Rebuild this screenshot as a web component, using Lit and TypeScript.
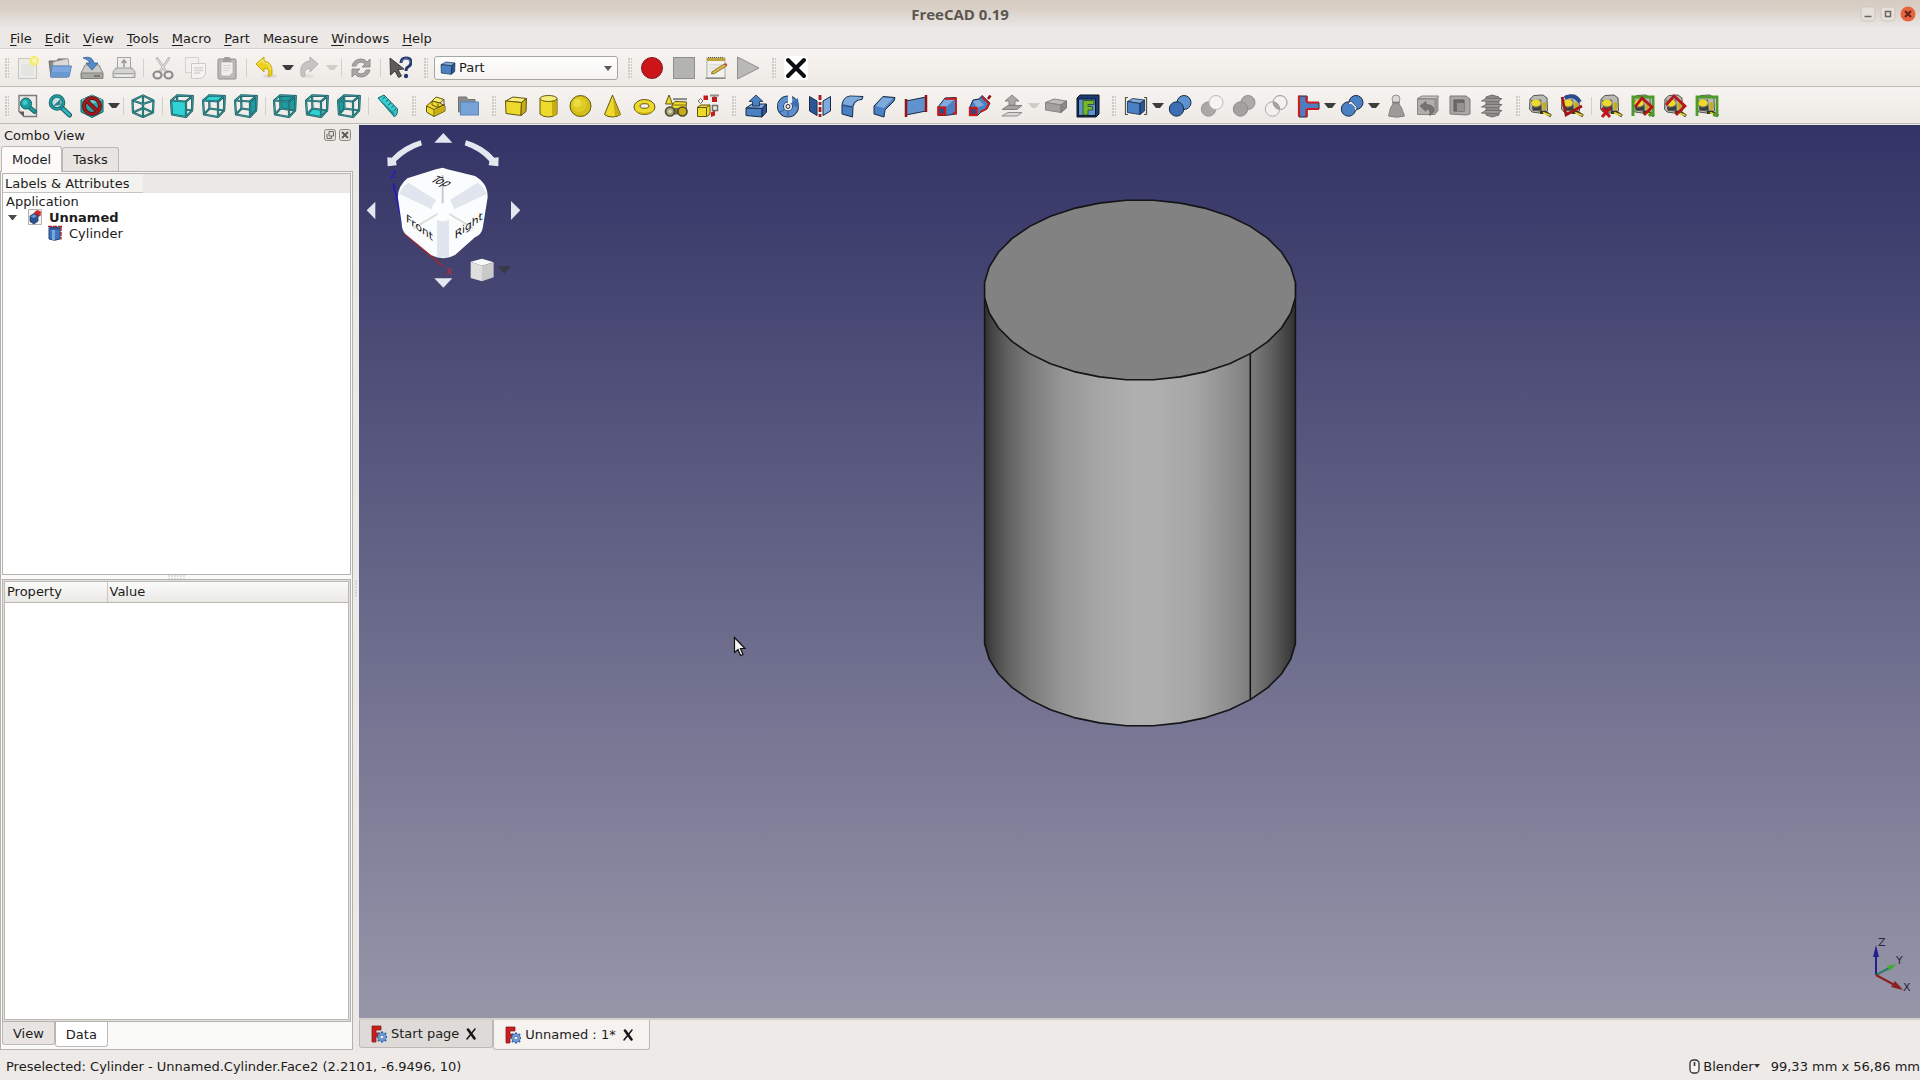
import { LitElement, html, css, svg, nothing, TemplateResult } from "lit";
import { customElement, state } from "lit/decorators.js";

type Art = TemplateResult;

/* ---- palette ---- */
const TEAL = "#2fd3d6";
const TEAL_MID = "#1a9ea1";
const TEAL_DARK = "#175f64";
const BLUE = "#4a80c4";
const BLUE_LIGHT = "#7fabdc";
const BLUE_DEEP = "#2a5596";
const INK = "#1b2a44";
const YEL = "#ecd92c";
const YEL_LIGHT = "#f7ee7a";
const YEL_DEEP = "#c7ad10";
const YEL_INK = "#625612";
const RED = "#c81a1a";

/* ---- shared drawing parts, all on a 24 x 24 grid ---- */
const FACES: Record<string, string> = {
  front: "M1 6.500 16 7.500 16 23 2 20.500Z",
  back: "M7 1.500 22.500 2 22 16.500 7.500 14.500Z",
  top: "M1 6.500 7 1.500 22.500 2 16 7.500Z",
  bottom: "M2 20.500 7.500 14.500 22 16.500 16 23Z",
  left: "M1 6.500 7 1.500 7.500 14.500 2 20.500Z",
  right: "M16 7.500 22.500 2 22 16.500 16 23Z",
};

const wire = (d: string): Art => svg`
  <path d=${d} fill="none" stroke=${TEAL_DARK} stroke-width="2.2" stroke-linejoin="round"></path>
  <path d=${d} fill="none" stroke="#59b9bb" stroke-width="0.6" stroke-linejoin="round"></path>`;

const viewCube = (face: string, tone: string, inFront: boolean): Art => svg`
  ${inFront ? nothing : svg`<path d=${FACES[face]} fill=${tone}></path>`}
  ${wire(FACES.back)}${wire("M2 20.500 7.500 14.500")}
  ${inFront ? svg`<path d=${FACES[face]} fill=${tone}></path>` : nothing}
  ${wire(FACES.top)}${wire(FACES.right)}${wire("M1 6.500 2 20.500 16 23")}`;

const block = (top: string, front: string, side: string, ink: string): Art => svg`
  <path d="M1.500 7 9 3 22.500 4.500 17.500 8.500Z" fill=${top} stroke=${ink} stroke-linejoin="round"></path>
  <path d="M1.500 7 17.500 8.500 17 21.500 2 19.500Z" fill=${front} stroke=${ink} stroke-linejoin="round"></path>
  <path d="M17.500 8.500 22.500 4.500 22 17.500 17 21.500Z" fill=${side} stroke=${ink} stroke-linejoin="round"></path>`;

const tape = (): Art => svg`
  <path d="M2 5 6 1.500 15 1 19 4 19.500 17 15 19.500 4 18 1.500 15Z" fill="#b9b9b5" stroke="#55554f"></path>
  <path d="M3 6 13 5.500 14.500 18 4.500 16.500Z" fill="#6a6a66"></path>
  <ellipse cx="8" cy="9" rx="4.800" ry="3.600" fill=${YEL}></ellipse>
  <path d="M4 13q4 2 9-1v4l-8 .5Z" fill="#3c3c3a"></path>
  <ellipse cx="16.500" cy="12" rx="1.800" ry="4" fill=${YEL_DEEP}></ellipse>
  <path d="M12 18.500 17 18 23 22" fill="none" stroke="#3a3614" stroke-width="3"></path>
  <path d="M15 18.500 22.500 21.500" fill="none" stroke=${YEL} stroke-width="1.600"></path>`;

const spheres = (a: string, b: string, ink: string): Art => svg`
  <circle cx="16" cy="8.500" r="7" fill=${b} stroke=${ink}></circle>
  <circle cx="8.500" cy="15" r="7.200" fill=${a} stroke=${ink}></circle>`;

const ICONS: Record<string, Art> = {
  new: svg`
    <rect x="2.500" y="2.500" width="18" height="20" fill="#ecece9" stroke="#c6c6c2"></rect>
    <rect x="5" y="8" width="13" height="12" fill="#dededb" opacity=".5"></rect>
    <circle cx="18" cy="5" r="5" fill="#f3ea77"></circle><circle cx="18.500" cy="4.500" r="2.600" fill="#f9f4a8"></circle>`,
  open: svg`
    <path d="M1 5h8l1-2h10v6l-1 12H3Z" fill="#8a8a87" stroke="#6d6d6a"></path>
    <path d="M5 6 20 2.500 21 10H5Z" fill="#d9d9d6" stroke="#9a9a97" stroke-width=".7"></path>
    <path d="M4 10h19.500L21 21H2.500Z" fill="#7ba7dc" stroke="#5a87c0"></path><path d="M3.500 16h18.500l-1 4.500H3Z" fill="#6a98d0"></path>`,
  save: svg`
    <path d="M5 9h14l4 8v5.500H1V17Z" fill="#c9c9c6" stroke="#8b8b88"></path>
    <path d="M1.500 17h21v5.500h-21Z" fill="#a9a9a6" stroke="#85857f"></path><path d="M14 20h6" stroke="#666" stroke-width="1.500"></path>
    <path d="M3 2q9-3 11 5h4l-6 7-6-7h4Q8 3 3 2Z" fill="#5689c9" stroke="#34609c" stroke-width=".8"></path>`,
  print: svg`
    <rect x="5.500" y="1.500" width="13" height="12" fill="#ededeb" stroke="#a5a5a2"></rect>
    <path d="M12 4v7M9.500 7 12 4l2.500 3" fill="none" stroke="#9b9b98" stroke-width="1.500"></path>
    <path d="M4 12h16l3 4v5.500H1V16Z" fill="#d4d4d1" stroke="#999996"></path><path d="M1.500 17.500h21" stroke="#a5a5a2"></path>
    <path d="M4 20h16" stroke="#f2f2f0" stroke-width="1.500"></path>`,
  cut: svg`
    <path d="M5.500 1.500 16 17M18.500 1.500 8 17" stroke="#b9b8b6" stroke-width="2.600" fill="none"></path>
    <path d="M6 2.500 15.500 16M18 2.500 8.500 16" stroke="#e6e5e3" stroke-width="1" fill="none"></path>
    <ellipse cx="6.500" cy="19" rx="4" ry="3.500" fill="none" stroke="#8b8b89" stroke-width="2.200"></ellipse>
    <ellipse cx="17.500" cy="19" rx="4" ry="3.500" fill="none" stroke="#8b8b89" stroke-width="2.200"></ellipse>`,
  copy: svg`
    <rect x="2.500" y="1.500" width="13" height="15" fill="#f1f0ee" stroke="#d3d2d0"></rect>
    <path d="M8.500 7.500h14v11l-4 4h-10Z" fill="#f4f3f1" stroke="#cbcac8"></path>
    <path d="M11 12h9M11 14.500h9M11 17h6" stroke="#d4d3d1" stroke-width="1.300"></path>`,
  paste: svg`
    <rect x="3" y="3" width="18" height="20" rx="1" fill="#bcbbb9" stroke="#8f8e8c"></rect>
    <path d="M6 6h12v10.500L14.500 20H6Z" fill="#f0efed" stroke="#aaa9a7" stroke-width=".7"></path>
    <path d="M8 3.500 9.500 1h5L16 3.500V6H8Z" fill="#a09f9d"></path><path d="M8 9.500h8M8 12h8M8 14.500h6" stroke="#d2d1cf"></path>`,
  undo: svg`
    <ellipse cx="16" cy="20" rx="7" ry="2" fill="#ddd8d2"></ellipse>
    <path d="M2 8 10 1v4q9 1 8 13-1 3-4 2 3-7-4-8v4Z" fill="#ecd21e" stroke="#c2a70d"></path>
    <path d="M4 8 9 3.500V6.500q7 0 8 7" fill="none" stroke="#f8ee8c"></path>`,
  redo: svg`
    <ellipse cx="9" cy="20" rx="7" ry="2" fill="#e2dfdb"></ellipse>
    <path d="M20 8 12 1v4Q1 6 3 19q1 3 4 1-2-7 5-8v4Z" fill="#c6c5c2" stroke="#b2b1ae"></path>`,
  refresh: svg`
    <path d="M3 10Q5 3 12 3q4 0 6 3l3-3v8h-8l3-3q-2-2-4-2-4 0-5 4Z" fill="#a8a7a5" stroke="#8f8e8c"></path>
    <path d="M21 14q-2 7-9 7-4 0-6-3l-3 3v-8h8l-3 3q2 2 4 2 4 0 5-4Z" fill="#a8a7a5" stroke="#8f8e8c"></path>`,
  whats: svg`
    <path d="M2 2 16 13l-6 .5L13.500 20l-3 1.500L7 15l-4.500 4Z" fill="#5c5c5a" stroke="#3a3a39"></path>
    <path d="M13 7q0-5 5-5t5 4.500q0 3-3 4.500-2 1-2 4" fill="none" stroke="#26386e" stroke-width="3"></path>
    <path d="M13.300 6.500q.5-4 4.700-4t4.500 4" fill="none" stroke="#5c75b4" stroke-width="1"></path><circle cx="18" cy="20" r="2.200" fill="#26386e"></circle>`,
  record: svg`<circle cx="12" cy="12" r="10.500" fill="#cb1518" stroke="#7d1a1b"></circle>`,
  stop: svg`<rect x="1.500" y="1.500" width="21" height="21" fill="#b3b3b1" stroke="#8f8f8c"></rect>`,
  notes: svg`
    <rect x="3" y="2" width="18" height="20" fill="#f1f1ee" stroke="#a9a9a6"></rect><path d="M1.500 21.500h20v1.500h-20Z" fill="#8d8d8a"></path>
    <path d="M3 2h18v3H3Z" fill="#bfa338"></path><path d="M4 1.500h16" stroke="#55534a" stroke-dasharray="1 1"></path>
    <path d="M5 9h13M5 12h12M5 15h9" stroke="#d1d1ce"></path>
    <path d="M8 16 20 8l2.500 2L10.500 17.500 7.500 18Z" fill="#e2b93c" stroke="#75602a" stroke-width=".8"></path><path d="M20 8 22 7l1.500 2-1.500 1Z" fill="#cc4544"></path>`,
  play: svg`<path d="M1.500 1 23 12 1.500 23Z" fill="#b9b9b7" stroke="#8f8f8c"></path>`,
  close: svg`<rect width="24" height="24" fill="#fff"></rect><path d="M4 4 20 20M20 4 4 20" stroke="#0e0e12" stroke-width="4" stroke-linecap="round"></path>`,

  fitAll: svg`
    <path d="M3 1.500h17.500v21H8l-5-5Z" fill="#ecebe9" stroke="#7c7b79" stroke-width="1.400"></path><path d="M3 17.500h5v5Z" fill="#5e5d5b"></path>
    <path d="M13 13 18.500 17.500" stroke=${TEAL_DARK} stroke-width="4.500" stroke-linecap="round"></path><path d="M13 13 18.500 17.500" stroke=${TEAL_MID} stroke-width="2.500" stroke-linecap="round"></path>
    <circle cx="10" cy="9.500" r="5.500" fill=${TEAL_MID} stroke=${TEAL_DARK}></circle><circle cx="9" cy="8.500" r="2.500" fill="#46c6c9"></circle>`,
  fitSel: svg`
    <path d="M13.500 13.500 21.500 21" stroke=${TEAL_DARK} stroke-width="5" stroke-linecap="round"></path><path d="M13.500 13.500 21.500 21" stroke="#2fb9bc" stroke-width="2.800" stroke-linecap="round"></path>
    <circle cx="9" cy="8.500" r="6.500" fill="#c6dfe0" stroke=${TEAL_DARK} stroke-width="3.600"></circle><circle cx="9" cy="8.500" r="6.500" fill="none" stroke=${TEAL_MID} stroke-width="2"></circle>
    <path d="M5 12 12.500 5v6Z" fill="#2b8488"></path>`,
  drawStyle: svg`
    <path d="M12 1 23 6v12l-11 5.500L1 18V6Z" fill="#29a5a8" stroke=${TEAL_DARK}></path><path d="M12 1 23 6l-11 4L1 6Z" fill="#63cfd1"></path>
    <circle cx="12" cy="12" r="8" fill="none" stroke="#641315" stroke-width="4"></circle><path d="M6.500 6.500 17.500 17.500" stroke="#641315" stroke-width="4"></path>
    <circle cx="12" cy="12" r="8" fill="none" stroke="#a61c1f" stroke-width="2.200"></circle><path d="M6.500 6.500 17.500 17.500" stroke="#a61c1f" stroke-width="2.200"></path>`,
  iso: svg`
    ${wire("M12 14V2M12 14 2 18.500M12 14 22 18.500")}
    ${wire("M12 1.500 22.500 6.500 22 18.500 12 23 2 18.500 1.500 6.500Z")}${wire("M1.500 6.500 12 10 22.500 6.500M12 10V23")}`,
  front: viewCube("front", TEAL, true),
  top: viewCube("top", TEAL, true),
  right: viewCube("right", TEAL_MID, true),
  rear: viewCube("back", TEAL_MID, false),
  bottom: viewCube("bottom", TEAL, false),
  left: viewCube("left", TEAL_MID, false),
  ruler: svg`
    <path d="M2 4 8 1 21.500 15 21 20 18.500 23Z" fill="#38cdd0" stroke=${TEAL_DARK}></path><path d="M2 4 18.500 19v4Z" fill="#1f9396"></path>
    <path d="M9 3 6.500 5M12 6l-2 1.500M15 9l-3 2M17.500 12l-2 1.500M20 15l-2.500 2" stroke=${TEAL_DARK}></path>`,

  part: svg`
    <path d="M8 7 12 3 20 5.500 16 9Z" fill=${YEL_LIGHT} stroke=${YEL_INK}></path><path d="M2.500 12 8 7 16 9 21 12v5L10 22.500 2.500 18Z" fill=${YEL} stroke=${YEL_INK}></path>
    <path d="M2.500 12 10 15.500 21 10.500M10 15.500V22.500M8 7v4l6 2.500 6-3V5.500M14 9.500v4" fill="none" stroke=${YEL_INK}></path>
    <path d="M10.500 16 20.500 12v4.500l-10 5Z" fill=${YEL_DEEP}></path>`,
  group: svg`
    <path d="M2.500 3h8l1 2.500H19V18H2.500Z" fill="#8b8b89" stroke="#71716e"></path><rect x="4.500" y="8" width="18" height="13" fill="#78a3d7" stroke="#5883bb"></rect>`,
  box: block(YEL_LIGHT, YEL, YEL_DEEP, YEL_INK),
  cylinder: svg`
    <path d="M4 4.500V20q3 3 8.500 3t8.500-3V4.500Z" fill=${YEL} stroke=${YEL_INK}></path><path d="M16 7v15.500q3-.5 4.500-2V5Z" fill=${YEL_DEEP}></path>
    <ellipse cx="12.500" cy="4.500" rx="8.500" ry="3" fill=${YEL_LIGHT} stroke=${YEL_INK}></ellipse>`,
  sphere: svg`
    <circle cx="12.500" cy="12" r="10.500" fill="#d3bd18" stroke=${YEL_INK}></circle><circle cx="11" cy="10.500" r="7.500" fill="#dfcb24"></circle><circle cx="9.500" cy="9" r="4" fill="#eadb3e"></circle>`,
  cone: svg`
    <path d="M12.500 1 4.500 20.500q3 2.500 8 2.500t8-2.500Z" fill=${YEL} stroke=${YEL_INK}></path><path d="M13 3 15 22.500q3-.3 5-2Z" fill=${YEL_DEEP}></path>`,
  torus: svg`
    <ellipse cx="12.500" cy="13" rx="10.500" ry="7.500" fill=${YEL} stroke=${YEL_INK}></ellipse><path d="M3 16q9 6 19 0-2 4-9.500 4T3 16Z" fill=${YEL_DEEP}></path>
    <ellipse cx="12.500" cy="12" rx="4.500" ry="2.300" fill="#f3efec" stroke=${YEL_INK}></ellipse>`,
  primitives: svg`
    <path d="M5 1 1.500 10h7Z" fill=${YEL} stroke=${YEL_INK}></path><rect x="9" y="4" width="14" height="2.200" fill="#8f8f8b"></rect>
    <path d="M8 11 11 7.500 22.500 8 22 15H8Z" fill=${YEL} stroke=${YEL_INK}></path><path d="M8 11h14" stroke=${YEL_INK} stroke-width=".8"></path>
    <rect x="8" y="14" width="8" height="6.500" fill="#6c694c"></rect><circle cx="6" cy="17.500" r="4.500" fill="#a9a477" stroke="#4b4933" stroke-width="1.600"></circle><circle cx="6" cy="17.500" r="1.800" fill="#d9d6bb"></circle>
    <circle cx="18.500" cy="17.500" r="4.500" fill=${YEL_DEEP} stroke="#4b4933" stroke-width="1.600"></circle>`,
  builder: svg`
    <path d="M1.500 13 5 11h9v9l-3 2.500H1.500Z" fill=${YEL} stroke=${YEL_INK}></path><path d="M1.500 13.500h9v9M10.500 13.500 14 11" fill="none" stroke=${YEL_INK}></path>
    <path d="M4.500 4.500 7 7 4.500 9.500 2 7Z" fill="#eee" stroke="#6e6e6a"></path><rect x="7.500" y="1.500" width="4.500" height="4.500" fill=${RED}></rect>
    <path d="M14 1.500h9M18.500 1.500v5" stroke="#8d8d89" stroke-width="2"></path><rect x="16" y="3" width="5" height="5" fill=${RED}></rect>
    <rect x="16.500" y="11.500" width="5" height="5" fill="#eee" stroke="#6e6e6a" stroke-width="1.500"></rect><path d="M15 18.500 19 16.500v5l-4 1.500Z" fill=${RED}></path>`,

  extrude: svg`
    <path d="M2 14 8 10h14.500L18 14.500Z" fill=${BLUE_LIGHT} stroke=${INK}></path><path d="M2 14 18 14.500V23L2 21.500Z" fill=${BLUE} stroke=${INK}></path><path d="M18 14.500 22.500 10v8L18 23Z" fill=${BLUE_DEEP} stroke=${INK}></path>
    <path d="M12 1 19 7.500h-3.500V12h-7V7.500H5Z" fill=${BLUE} stroke=${INK} stroke-width=".8"></path>`,
  revolve: svg`
    <circle cx="12" cy="12.500" r="7.500" fill="none" stroke=${INK} stroke-width="7"></circle><circle cx="12" cy="12.500" r="7.500" fill="none" stroke="#5b8fce" stroke-width="5.500"></circle>
    <path d="M12 0h4v12h-4Z" fill="#f3efec"></path><path d="M22 4 14 10l9 4Z" fill="#3c70b3"></path><circle cx="12" cy="12.500" r="2" fill="#f3efec" stroke=${INK}></circle><path d="M4 18 8 16M12 17v5" stroke="#2b5897"></path>`,
  mirror: svg`
    <path d="M1.500 2.500 9 7v14.500L1.500 17Z" fill=${BLUE_DEEP} stroke=${INK}></path><path d="M22.500 2.500 15 7v14.500L22.500 17Z" fill=${BLUE_LIGHT} stroke=${INK}></path>
    <path d="M12 1v5M12 8v3M12 13v5M12 20v3" stroke="#a71c1f" stroke-width="2.800"></path>`,
  fillet: svg`
    <path d="M2 20V11Q3 3 10 2l13 .5-1 3q-7 0-9 7L12.500 23Z" fill=${BLUE} stroke=${INK}></path><path d="M10 2.500 22 3l-1 2q-7 0-9 7L3 10q1-7 7-7.500Z" fill=${BLUE_LIGHT}></path><path d="M3 11.500 12 13" stroke=${INK} stroke-width=".7"></path>`,
  chamfer: svg`
    <path d="M2 20 2 12 11 2.500 23 3.500 22 7 13 16 12 23Z" fill=${BLUE} stroke=${INK}></path><path d="M11 3.500 21 4.500 12 14 3.500 12Z" fill=${BLUE_LIGHT}></path>`,
  ruled: svg`
    <path d="M2 7 22 3v14L2 21Z" fill="#5f92cf" stroke=${INK}></path><path d="M2 5v18M22 1v17" stroke="#921316" stroke-width="2.500"></path>`,
  loft: svg`
    <path d="M2 13 9 4 20 3.500V20L9 21.500H2Z" fill=${BLUE} stroke=${INK}></path><path d="M9 5h10l-9 8H3Z" fill=${BLUE_LIGHT}></path>
    <path d="M9 5 20 4.500v15l-3-1" fill="none" stroke=${RED} stroke-width="1.800"></path><rect x="2.500" y="13.500" width="6.500" height="7" fill="#2a4c88" stroke=${RED} stroke-width="2.300"></rect>`,
  sweep: svg`
    <path d="M2 13 5 6 11 5 14 1.500 22 9 19 15 13 18 9 22Z" fill=${BLUE} stroke=${INK}></path><path d="M5 7 11 6 16 11 9 14Z" fill=${BLUE_LIGHT}></path>
    <path d="M14 3 21 9.500 18 15 12 18" fill="none" stroke=${RED} stroke-width="1.800"></path><rect x="2" y="14" width="6.500" height="7" fill="#2a4c88" stroke=${RED} stroke-width="2.300"></rect><path d="M20 5 22.500 1.500" stroke="#8b1316" stroke-width="2.600"></path>`,
  offset: svg`
    <path d="M12 1 19 7h-4v4H9V7H5Z" fill="#a9a8a6" stroke="#878684"></path><path d="M2 15.500 8 11.500h14L17 15.500Z" fill="#a3a2a0" stroke="#82817f"></path><path d="M2 22 8 18.500h14L17 22Z" fill="#dad9d7" stroke="#8f8e8c"></path>`,
  thickness: svg`
    <path d="M1.500 8.500 10 5l12.500 2L17 11Z" fill="#bdbcba" stroke="#868583"></path><path d="M1.500 8.500 17 11v7.500L1.500 16Z" fill="#a2a19f" stroke="#868583"></path><path d="M17 11 22.500 7v7L17 18.500Z" fill="#8a8987" stroke="#777674"></path>`,
  faces: svg`
    <path d="M1 4 4 1h19v19l-3 3H1Z" fill="#1c3b70" stroke="#0c1425"></path><rect x="2.500" y="5" width="17" height="16.500" fill="#5b93d4" stroke="#0c1425"></rect>
    <path d="M7 6.500h11v4h-6v2h4.500V16H12v5H7Z" fill="#74b62c" stroke="#2e4d12" stroke-width=".8"></path>`,

  compound: svg`
    <path d="M3.500 7.500 8.500 4.500 20.500 6 16 9.500Z" fill=${BLUE_LIGHT} stroke=${INK} stroke-width=".8"></path><path d="M3.500 7.500 16 9.500V20.500L3.500 18.500Z" fill=${BLUE} stroke=${INK} stroke-width=".8"></path><path d="M16 9.500 20.500 6v11L16 20.500Z" fill=${BLUE_DEEP} stroke=${INK} stroke-width=".8"></path>
    <path d="M4 3.500H1.500v17H4M20 3.500h2.500v17H20" fill="none" stroke="#55544f" stroke-width="1.200"></path>`,
  boolean: spheres("#3a6fb4", "#5f92d0", INK),
  cutB: svg`<circle cx="8.500" cy="15" r="7.200" fill="#a9a8a6" stroke="#969593"></circle><circle cx="16" cy="8.500" r="7" fill="#f5f4f2" stroke="#bbbab8"></circle>`,
  fuse: spheres("#a3a2a0", "#acabaa", "#8f8e8c"),
  common: svg`
    <circle cx="16" cy="8.500" r="7" fill="#f2f1ef" stroke="#adacaa"></circle><circle cx="8.500" cy="15" r="7.200" fill="#f2f1ef" stroke="#adacaa"></circle>
    <path d="M9.300 8Q14.500 8.500 15.500 15.400 10 14.500 9.300 8Z" fill="#a5a4a2" stroke="#949391"></path><circle cx="16" cy="8.500" r="7" fill="none" stroke="#adacaa"></circle>`,
  join: svg`
    <path d="M3 2h8v6.500h12v6.500H11v8H3Z" fill="#4c7fbf" stroke=${INK}></path><path d="M3 1.500V22.500M10.500 2v6M11 8.500h12M11 15h12M10.500 15v8" stroke="#cf1b1e" stroke-width="2.200" fill="none"></path>`,
  split: svg`
    ${spheres("#4a80c4", "#4a80c4", INK)}<path d="M8 9 11 7l6 6-1 4Z" fill="#f0edea" stroke=${INK} stroke-width=".6"></path><path d="M10 10.500 14.500 14.500" stroke="#4a80c4" stroke-width="3"></path>`,
  check: svg`
    <circle cx="12" cy="5" r="4" fill="#d9d8d6" stroke="#969593"></circle><path d="M9.500 9h5l3 5 3 8q-8 2.500-16 0l2-8Z" fill="#9c9b99" stroke="#82817f"></path><path d="M8 8.500h8" stroke="#82817f" stroke-width="1.600"></path>`,
  defeature: svg`
    <path d="M1.500 4.500 6 2h16.500L21 5Z" fill="#c5c4c2" stroke="#868583"></path><path d="M1.500 5H19v15.500H1.500Z" fill="#b0afad" stroke="#868583"></path><path d="M19 5 22.500 2v15L19 20.500Z" fill="#969593"></path>
    <path d="M4 12 10 7.500V10.500q8 0 8 6-1 4-4.500 5 2-6-3.500-6.500v2.500Z" fill="#757472" stroke="#62615f" stroke-width=".7"></path>`,
  section: svg`
    <path d="M2 2h16l4 3v15l-4 1L2 20Z" fill="#a8a7a5" stroke="#7c7b79"></path><rect x="6" y="6" width="10" height="11" fill="#6c6b69" stroke="#5a5957"></rect><rect x="9" y="9" width="7" height="8" fill="#93928f"></rect>`,
  cross: svg`
    <path d="M6 3 12 1l7 2v18l-7 2-6-2Z" fill="#8c8b89" stroke="#71706e"></path>
    <path d="M1.500 7 6 4.500h16L18 7.500ZM1.500 13 6 10.500h16L18 13.500ZM1.500 19 6 16.500h16L18 19.500Z" fill="#9d9c9a" stroke="#71706e"></path>`,

  mLinear: tape(),
  mAngular: svg`${tape()}<path d="M5 4Q14-1 20 8" fill="none" stroke="#2a4c8f" stroke-width="4"></path><path d="M2 3 6 21 22 12" fill="none" stroke="#a31418" stroke-width="2.600"></path>`,
  mClear: svg`${tape()}<path d="M3 14 11 23M11 14 3 23" stroke="#c0151a" stroke-width="3"></path>`,
  mToggleAll: svg`${tape()}<path d="M2 22V3H22V22M22 18 18 22" fill="none" stroke="#4f9a2a" stroke-width="3"></path><path d="M4 13 11 4 21 13 13 21" fill="none" stroke="#b5161b" stroke-width="2.800"></path>`,
  mToggle3d: svg`${tape()}<path d="M3 11 11 2 22 12 13 21" fill="none" stroke="#b5161b" stroke-width="2.800"></path>`,
  mToggleDelta: svg`${tape()}<path d="M2 22V3H22V21H18" fill="none" stroke="#4f9a2a" stroke-width="2.800"></path>`,

  cubeSmall: block(BLUE_LIGHT, BLUE, BLUE_DEEP, INK),
};

const icon = (name: string, cls = "ico"): TemplateResult =>
  html`<svg class=${cls} viewBox="0 0 24 24" aria-hidden="true">${ICONS[name]}</svg>`;

/* ---- tessellated cylinder: two 36-sided rings joined by straight sides ---- */
const RING = { cx: 180, cy: 110, rx: 156, ry: 90, depth: 346, sides: 36 };
const ringPoint = (step: number, dy: number): string => {
  const a = ((step * 360) / RING.sides - 5) * (Math.PI / 180);
  return `${(RING.cx + RING.rx * Math.cos(a)).toFixed(1)} ${(RING.cy + dy + RING.ry * Math.sin(a)).toFixed(1)}`;
};
const ring = (from: number, to: number, dy: number): string =>
  Array.from({ length: to - from + 1 }, (_, i) => ringPoint(from + i, dy)).join(" ");
const CAP_PATH = `M${ring(0, RING.sides - 1, 0)}Z`;
const BODY_PATH = `M${ringPoint(0, 0)} ${ring(0, 18, RING.depth)} ${ringPoint(18, 0)}Z`;
const SEAM_PATH = `M${ringPoint(5, 0)} ${ringPoint(5, RING.depth)}`;

/* Toolbar rows: [icon, label, has menu, disabled] or a divider token. */
type Tool = [string, string, boolean?, boolean?] | "sep" | "grip";

const FILE_BAR: Tool[] = [
  ["new", "New"], ["open", "Open"], ["save", "Save"], ["print", "Print"], "sep",
  ["cut", "Cut", false, true], ["copy", "Copy", false, true], ["paste", "Paste", false, true], "sep",
  ["undo", "Undo", true], ["redo", "Redo", true, true], "sep",
  ["refresh", "Refresh", false, true], "sep", ["whats", "What's this?"], "grip",
];
const MACRO_BAR: Tool[] = [
  "grip", ["record", "Record macro"], ["stop", "Stop recording", false, true], ["notes", "Macros"], ["play", "Run macro", false, true],
  "grip", ["close", "Close"],
];
const PART_BAR: Tool[] = [
  ["fitAll", "Fit all"], ["fitSel", "Fit selection"], ["drawStyle", "Draw style", true], "sep",
  ["iso", "Isometric"], "sep", ["front", "Front"], ["top", "Top"], ["right", "Right"], "sep",
  ["rear", "Rear"], ["bottom", "Bottom"], ["left", "Left"], "sep", ["ruler", "Measure distance"], "grip",
  ["part", "Create part"], ["group", "Create group"], "grip",
  ["box", "Cube"], ["cylinder", "Cylinder"], ["sphere", "Sphere"], ["cone", "Cone"], ["torus", "Torus"],
  ["primitives", "Create primitives"], ["builder", "Shape builder"], "grip",
  ["extrude", "Extrude"], ["revolve", "Revolve"], ["mirror", "Mirror"], ["fillet", "Fillet"], ["chamfer", "Chamfer"],
  ["ruled", "Ruled surface"], ["loft", "Loft"], ["sweep", "Sweep"], ["offset", "Offset", true, true],
  ["thickness", "Thickness", false, true], ["faces", "Color per face"], "grip",
  ["compound", "Compound", true], ["boolean", "Boolean"], ["cutB", "Cut", false, true], ["fuse", "Union", false, true],
  ["common", "Intersection", false, true], ["join", "Join", true], ["split", "Split", true],
  ["check", "Check geometry", false, true], ["defeature", "Defeaturing", false, true],
  ["section", "Section", false, true], ["cross", "Cross-sections", false, true], "grip",
  ["mLinear", "Measure linear"], ["mAngular", "Measure angular"], "sep", ["mClear", "Clear measurement"],
  ["mToggleAll", "Toggle all"], ["mToggle3d", "Toggle 3D"], ["mToggleDelta", "Toggle delta"],
];
const MENUS: [string, boolean][] = [
  ["File", true], ["Edit", true], ["View", true], ["Tools", true], ["Macro", true],
  ["Part", true], ["Measure", false], ["Windows", true], ["Help", true],
];

@customElement("app-root")
export class AppRoot extends LitElement {
  @state() private panel = "Model";
  @state() private propTab = "Data";
  @state() private page = "Unnamed : 1*";

  static styles = css`
    :host {
      display: flex;
      flex-direction: column;
      min-height: 100vh;
      background: #eeeae7;
      color: #1c1c1c;
      font: 13px/17px "DejaVu Sans", sans-serif;
      --dots: radial-gradient(circle at 1px 1px, #cbc8c5 1px, transparent 1px) 0 0 / 3px 3px;
    }
    * { box-sizing: border-box; }
    button, select { font: inherit; color: inherit; margin: 0; border: 0; padding: 0; background: none; }
    svg { display: block; }
    ul { list-style: none; margin: 0; padding: 0; }

    .titlebar {
      display: grid;
      grid-template-columns: 1fr auto 1fr;
      align-items: center;
      height: 27px;
      padding: 0 4px;
      background: linear-gradient(#d6cbc1, #d8cfc6 30%, #eae6e3);
    }
    .title { grid-column: 2; margin: 0; font: 700 15px/20px "Open Sans", sans-serif; color: #5c5650; }
    .winbtns { display: flex; justify-content: flex-end; gap: 4px; }
    .win { width: 16px; height: 16px; }
    .win svg { width: 16px; height: 16px; }

    .menubar { display: flex; height: 22px; padding: 2px 4px 0; background: #ece8e5; border-bottom: 1px solid #d5d1ce; }
    .menu { padding: 0 7px 0 6px; line-height: 18px; }
    .menu u { text-underline-offset: 2px; }

    .bar {
      display: flex;
      align-items: center;
      height: 38px;
      background: linear-gradient(#f6f3f0, #edeae6);
      border-bottom: 1px solid #bfbbb7;
    }
    .bar.second { height: 37px; padding-top: 1px; }
    .tool { display: flex; flex: none; align-items: center; height: 32px; padding: 0 4px; }
    .tool.has-menu::after {
      content: "";
      width: 8px;
      border: 4px solid transparent;
      border-top: 5px solid #3d3d3d;
      border-bottom: 0;
      margin: 0 0 0 4px;
    }
    .tool.has-menu { width: 44px; padding-right: 0; }
    .tool.has-menu:disabled::after { border-top-color: #cfccc9; }
    .ico { width: 24px; height: 24px; flex: none; }
    .sep { flex: none; width: 1px; height: 18px; margin: 0 3px; background: #d2cfcc; }
    .grip { flex: none; width: 4px; height: 20px; margin: 0 4px 0 8px; background: var(--dots); }
    .grip.first { margin: 0 3px 0 5px; }

    .workbench { position: relative; width: 184px; height: 24px; margin: 0 2px; flex: none; }
    .workbench select {
      appearance: none;
      width: 100%;
      height: 100%;
      padding: 0 24px 0 24px;
      border: 1px solid #a8a5a1;
      border-radius: 3px;
      background: linear-gradient(#fff, #f4f3f1);
    }
    .workbench .wb-icon { position: absolute; left: 6px; top: 4px; width: 16px; height: 16px; pointer-events: none; }
    .workbench .wb-arrow {
      position: absolute; right: 6px; top: 10px; border: 4px solid transparent; border-top: 5px solid #595959; border-bottom: 0; pointer-events: none;
    }

    .main { flex: 1; display: grid; grid-template-columns: 353px 6px 1fr; padding-top: 1px; }
    .dock { display: flex; flex-direction: column; min-height: 0; padding-bottom: 2px; }
    .dock-title { display: flex; align-items: center; gap: 3px; height: 20px; padding: 0 2px 0 4px; }
    .dock-title h2 { margin: 0 auto 0 0; font: inherit; }
    .mini { width: 12px; height: 12px; }
    .mini svg { width: 12px; height: 12px; }

    .tabs { display: flex; align-items: flex-end; height: 26px; padding-left: 1px; }
    .tab {
      height: 24px;
      padding: 0 10px;
      border: 1px solid #bcb8b4;
      border-bottom: 0;
      border-radius: 3px 3px 0 0;
      background: #e7e4e1;
    }
    .tab.on { position: relative; z-index: 1; height: 26px; background: #fcfbfa; margin-bottom: -1px; }

    .pane {
      flex: 1;
      display: flex;
      flex-direction: column;
      border: 1px solid #b5b1ad;
      background: #fafaf8;
      padding: 1px 1px 2px 1px;
    }
    .tree { flex: 405 1 0; border: 1px solid #b5b3ae; background: #fff; }
    .tree-head { display: flex; background: #ece8e5; height: 19px; line-height: 19px; }
    .tree-head span {
      width: 140px;
      padding-left: 2px;
      background: linear-gradient(90deg, #fafaf8, #f2f1ee);
      border-bottom: 1px solid #c6c3c0;
      white-space: nowrap;
    }
    .row { display: flex; align-items: center; height: 16px; padding-left: 3px; white-space: nowrap; }
    .row.doc { padding-left: 5px; font-weight: 700; }
    .row.item { padding-left: 44px; }
    .row svg { width: 16px; height: 16px; margin-right: 6px; }
    .twist { width: 9px; margin-right: 10px; border: 4px solid transparent; border-top: 5px solid #4a4a4a; border-bottom: 0; }
    .hgrip { width: 18px; height: 4px; margin: 0 auto; background: var(--dots); opacity: .6; }
    .props { flex: 444 1 0; border: 1px solid #b5b3ae; padding: 1px; background: #e2dfda; }
    .props-in { height: 100%; background: #fff; border: 1px solid #bdbab5; }
    table { width: 100%; border-collapse: collapse; }
    th {
      height: 20px; padding: 0 2px; text-align: left; font-weight: 400; background: linear-gradient(#fbfbf9, #e9e8e5); border-bottom: 1px solid #b9b6b2;
    }
    th.key { width: 102px; border-right: 1px solid #c9c6c2; }
    .btabs { display: flex; align-items: flex-start; height: 25px; }
    .btab { height: 23px; padding: 0 10px; border: 1px solid #bcb8b4; border-top: 0; border-radius: 0 0 3px 3px; background: #e7e4e1; }
    .btab.on { height: 25px; background: #fff; }

    .splitter { display: flex; align-items: center; justify-content: center; background: #eceae7; }
    .vgrip { width: 3px; height: 18px; background: var(--dots); opacity: .6; }

    .stage { display: flex; flex-direction: column; min-width: 0; }
    .view { position: relative; flex: 1; overflow: hidden; background: linear-gradient(#333366, #9796a9); }
    .solid { position: absolute; left: calc(50% - 180px); top: 55px; width: 360px; height: 560px; }
    .navicube { position: absolute; left: 1px; top: 0; width: 180px; height: 175px; }
    .axes { position: absolute; right: 0; bottom: 18px; width: 60px; height: 70px; }
    .pointer { position: absolute; left: 374px; top: 511px; width: 14px; height: 22px; }
    .lbl { font: 11px "DejaVu Sans", sans-serif; }
    .axis-lbl { font: 27px "DejaVu Sans", sans-serif; }
    .face-lbl { font: 32px "DejaVu Sans", sans-serif; }

    .pages { display: flex; align-items: flex-start; height: 34px; border-top: 2px solid #d3d0cc; }
    .page {
      display: flex;
      align-items: center;
      gap: 4px;
      height: 28px;
      padding: 0 15px 0 11px;
      border: 1px solid #bcb8b4;
      border-top: 0;
      border-radius: 0 0 3px 3px;
      background: #dedad7;
    }
    .page.on { height: 30px; background: #f5f2ef; }
    .page svg { width: 16px; height: 18px; flex: none; }
    .page .x { width: 12px; height: 12px; margin-left: 2px; }

    .status { display: flex; align-items: center; height: 28px; padding: 0 0 0 6px; }
    .status output { flex: 1; }
    .nav { display: flex; align-items: center; margin-right: 11px; }
    .nav svg { width: 11px; height: 15px; margin-right: 3px; }
    .nav::after { content: ""; border: 3px solid transparent; border-top: 4px solid #333; border-bottom: 0; }
    .dims { white-space: nowrap; }
  `;

  private tool(t: Tool): TemplateResult {
    if (t === "sep") return html`<span class="sep"></span>`;
    if (t === "grip") return html`<span class="grip"></span>`;
    const [name, label, menu, off] = t;
    return html`<button class="tool ${menu ? "has-menu" : ""}" aria-label=${label} ?disabled=${!!off}>${icon(name)}</button>`;
  }

  private navicube() {
    return html`<svg class="navicube" viewBox="0 15 540 525" role="img" aria-label="Navigation cube">
      <g fill="#e2e7f0">
        <path d="M250 39 277 68H223Z"></path><path d="M250 503 277 475H223Z"></path>
        <path d="M20 271 46 245V298Z"></path><path d="M481 271 453 243V300Z"></path>
        <path d="M182 61 186 76Q140 92 108 124L110 136 83 139 82 112 95 113Q130 76 182 61Z"></path>
        <path d="M318 61 314 76Q360 92 388 124L386 136 415 139 416 112 403 113Q370 76 318 61Z"></path>
      </g>
      <path d="M100 190 133 335" stroke="#1c1cc0" stroke-width="5"></path>
      <path d="M133 340 248 438" stroke="#b32222" stroke-width="4"></path>
      <text class="axis-lbl" x="90" y="173" fill="#1c1cd0">Z</text>
      <text class="axis-lbl" x="257" y="465" fill="#d02222">X</text>
      <path d="M248 143 262 148 345 168Q384 190 383 232L368 325Q364 345 345 352L285 405Q250 425 213 405L140 345Q125 335 125 310L114 235Q112 200 142 175L228 148Z" fill="#fbfcfe"></path>
      <path d="M146 188 228 240 216 268 118 222Q125 200 146 188Z" fill="#e1e6ee"></path>
      <path d="M352 188 270 240 282 268 380 222Q372 200 352 188Z" fill="#e1e6ee"></path>
      <path d="M231 298H267V412H231Z" fill="#e1e6ee"></path>
      <circle cx="248" cy="271" r="33" fill="#fcfdff"></circle>
      <path d="M248 165V250" stroke="#c6cbd3" stroke-width="6"></path>
      <path d="M232 282 160 325M268 282 340 325" stroke="#dcdcd8" stroke-width="6"></path>
      <text class="face-lbl" transform="translate(138 304) skewY(36)" fill="#111">Front</text>
      <text class="face-lbl" transform="translate(284 358) skewY(-36)" fill="#111">Right</text>
      <text class="face-lbl" transform="translate(208 184) rotate(18) skewX(-38)" fill="#111">Top</text>
      <path d="M332 425 366 416 401 427 366 437Z" fill="#f7f7f7"></path><path d="M332 425 366 437V484L332 474Z" fill="#dededf"></path><path d="M401 427 366 437V484L401 472Z" fill="#c9c9ca"></path>
      <path d="M413 439H453L433 461Z" fill="#393942"></path>
    </svg>`;
  }

  private solid() {
    return html`<svg class="solid" viewBox="0 0 360 560" role="img" aria-label="Cylinder">
      <defs>
        <linearGradient id="side" gradientUnits="userSpaceOnUse" x1="24" x2="336" y1="0" y2="0">
          <stop offset="0" stop-color="#303030"></stop><stop offset=".03" stop-color="#474747"></stop>
          <stop offset=".08" stop-color="#636363"></stop><stop offset=".15" stop-color="#7c7c7c"></stop>
          <stop offset=".25" stop-color="#969696"></stop><stop offset=".36" stop-color="#a5a5a5"></stop>
          <stop offset=".48" stop-color="#afafaf"></stop><stop offset=".57" stop-color="#aeaeae"></stop>
          <stop offset=".68" stop-color="#a5a5a5"></stop><stop offset=".79" stop-color="#8e8e8e"></stop>
          <stop offset=".86" stop-color="#7b7b7b"></stop><stop offset=".93" stop-color="#5b5b5b"></stop>
          <stop offset=".98" stop-color="#3d3d3d"></stop><stop offset="1" stop-color="#2e2e2e"></stop>
        </linearGradient>
      </defs>
      <g stroke="#141416" stroke-width="1.600" stroke-linejoin="round">
        <path d=${BODY_PATH} fill="url(#side)"></path>
        <path d=${CAP_PATH} fill="#828282"></path>
        <path d=${SEAM_PATH}></path>
      </g>
    </svg>`;
  }

  private logo() {
    return html`<svg viewBox="0 0 16 18" aria-hidden="true">
      <path d="M1 1h9v4H5v3h4v3H5v6H1Z" fill="#c91f1f" stroke="#7d1313" stroke-width=".7"></path>
      <path d="M11 6.500v11M5.500 12h11M7 8l8 8M15 8l-8 8" stroke="#33609f" stroke-width="2"></path>
      <circle cx="11" cy="12" r="3" fill="none" stroke="#33609f" stroke-width="3"></circle>
      <circle cx="11" cy="12" r="3" fill="none" stroke="#6c9bd6" stroke-width="2"></circle><circle cx="11" cy="12" r="1.600" fill="#f2efec"></circle>
    </svg>`;
  }

  render() {
    const page = (name: string) => html`
      <button class="page ${this.page === name ? "on" : ""}" role="tab" aria-selected=${this.page === name} @click=${() => (this.page = name)}>
        ${this.logo()}<span>${name}</span>
        <svg class="x" viewBox="0 0 12 12" aria-hidden="true"><path d="M3 1.500 9.500 10.500" stroke="#15151a" stroke-width="2.600" stroke-linecap="round"></path><path d="M10 1 2 11" stroke="#15151a" stroke-width="1.500" stroke-linecap="round"></path></svg>
      </button>`;
    return html`
      <header class="titlebar">
        <h1 class="title">FreeCAD 0.19</h1>
        <div class="winbtns">
          <button class="win" aria-label="Minimize"><svg viewBox="0 0 16 16"><rect x="1" y="1" width="14" height="14" rx="3" fill="#e6e0da" stroke="#cfc7bf"></rect><path d="M4.500 10.500h7" stroke="#6b655f" stroke-width="1.500"></path></svg></button>
          <button class="win" aria-label="Maximize"><svg viewBox="0 0 16 16"><rect x="1" y="1" width="14" height="14" rx="3" fill="#e6e0da" stroke="#cfc7bf"></rect><rect x="5.500" y="5.500" width="5" height="5" fill="none" stroke="#6b655f" stroke-width="1.500"></rect></svg></button>
          <button class="win" aria-label="Close window"><svg viewBox="0 0 16 16"><circle cx="8" cy="8" r="7.500" fill="#e8633f"></circle><path d="M5 5 11 11M11 5 5 11" stroke="#5a2416" stroke-width="1.800"></path></svg></button>
        </div>
      </header>

      <nav class="menubar">
        ${MENUS.map(([m, key]) => html`<button class="menu">${key ? html`<u>${m[0]}</u>${m.slice(1)}` : m}</button>`)}
      </nav>

      <div class="bar" role="toolbar" aria-label="File and macro">
        <span class="grip first"></span>
        ${FILE_BAR.map((t) => this.tool(t))}
        <div class="workbench">
          <select aria-label="Workbench"><option>Part</option></select>
          ${icon("cubeSmall", "wb-icon")}<span class="wb-arrow"></span>
        </div>
        ${MACRO_BAR.map((t) => this.tool(t))}
      </div>
      <div class="bar second" role="toolbar" aria-label="View and part">
        <span class="grip first"></span>
        ${PART_BAR.map((t) => this.tool(t))}
      </div>

      <main class="main">
        <aside class="dock">
          <div class="dock-title">
            <h2>Combo View</h2>
            <button class="mini" aria-label="Float panel"><svg viewBox="0 0 12 12"><rect x=".5" y=".5" width="11" height="11" rx="2" fill="#e4e1dd" stroke="#8b8783"></rect><path d="M5 2.500h4.500V7H5ZM3 5v4.500h4.500V7" fill="none" stroke="#6b6865"></path></svg></button>
            <button class="mini" aria-label="Close panel"><svg viewBox="0 0 12 12"><rect x=".5" y=".5" width="11" height="11" rx="2" fill="#e4e1dd" stroke="#8b8783"></rect><path d="M3 3 9 9M9 3 3 9" stroke="#5b5855" stroke-width="1.800"></path></svg></button>
          </div>
          <div class="tabs" role="tablist">
            ${["Model", "Tasks"].map((n) => html`<button class="tab ${this.panel === n ? "on" : ""}" role="tab" aria-selected=${this.panel === n} @click=${() => (this.panel = n)}>${n}</button>`)}
          </div>
          <div class="pane">
            <section class="tree">
              <div class="tree-head"><span>Labels &amp; Attributes</span></div>
              <ul>
                <li class="row">Application</li>
                <li class="row doc"><span class="twist"></span>
                  <svg viewBox="0 0 16 16" aria-hidden="true"><path d="M1.500.5h13v15h-13Z" fill="#f4f4f2" stroke="#b4b4b0"></path><path d="M7 3.500 10 1l4 1.500-.5 4.500L10 8Z" fill="#d02a2a"></path><path d="M3 7 7 4.500l4 2V12l-4 3-4-2.500Z" fill="#2c5596" stroke="#14284c" stroke-width=".7"></path><path d="M3.500 7.500 7 5.500l3 1.500-3 2Z" fill="#6b98d3"></path></svg>
                  Unnamed</li>
                <li class="row item">
                  <svg viewBox="0 0 16 16" aria-hidden="true"><path d="M2 3v11q5.500 2.500 11 0V3Z" fill="#3e75bb" stroke="#20437c"></path><path d="M5 4v11h3V4Z" fill="#78a7de"></path><ellipse cx="7.500" cy="3" rx="5.500" ry="1.800" fill="#2a5090"></ellipse><path d="M1 1.500h14M14 2v12.500" stroke="#a81f24" stroke-width="1.400" stroke-dasharray="4 1"></path></svg>
                  Cylinder</li>
              </ul>
            </section>
            <span class="hgrip"></span>
            <section class="props"><div class="props-in">
              <table><thead><tr><th class="key" scope="col">Property</th><th scope="col">Value</th></tr></thead><tbody></tbody></table>
            </div></section>
            <div class="btabs" role="tablist">
              ${["View", "Data"].map((n) => html`<button class="btab ${this.propTab === n ? "on" : ""}" role="tab" aria-selected=${this.propTab === n} @click=${() => (this.propTab = n)}>${n}</button>`)}
            </div>
          </div>
        </aside>
        <div class="splitter"><span class="vgrip"></span></div>
        <section class="stage">
          <div class="view">
            ${this.solid()} ${this.navicube()}
            <svg class="axes" viewBox="0 0 60 70" role="img" aria-label="Axis cross">
              <path d="M16 45V20" stroke="#22228c" stroke-width="2"></path><path d="M16 15 19 27H13Z" fill="#22228c"></path>
              <path d="M16 45 33 36" stroke="#2b7d6a" stroke-width="2"></path><path d="M36 34 30 41 27 36Z" fill="#3fae2f"></path>
              <path d="M16 45 40 58" stroke="#8c2020" stroke-width="2"></path><path d="M43 60 31 57 35 51Z" fill="#8c2020"></path>
              <g class="lbl" fill="#26263a"><text x="18" y="16">Z</text><text x="36" y="34">Y</text><text x="43" y="61">X</text></g>
            </svg>
            <svg class="pointer" viewBox="0 0 14 22" aria-hidden="true"><path d="M1.500 1.500V16.500L5 13.500 7.500 19.500 10 18.500 7.500 12.500H12Z" fill="#f4f4f4" stroke="#111" stroke-width="1.200"></path></svg>
          </div>
          <div class="pages" role="tablist">${page("Start page")}${page("Unnamed : 1*")}</div>
        </section>
      </main>

      <footer class="status">
        <output>Preselected: Cylinder - Unnamed.Cylinder.Face2 (2.2101, -6.9496, 10)</output>
        <button class="nav"><svg viewBox="0 0 11 15" aria-hidden="true"><rect x="1" y="1" width="9" height="13" rx="3.500" fill="#f6f4f2" stroke="#333" stroke-width="1.300"></rect><path d="M5.500 3v4" stroke="#333" stroke-width="1.600"></path></svg>Blender</button>
        <span class="dims">99,33 mm x 56,86 mm</span>
      </footer>`;
  }
}
